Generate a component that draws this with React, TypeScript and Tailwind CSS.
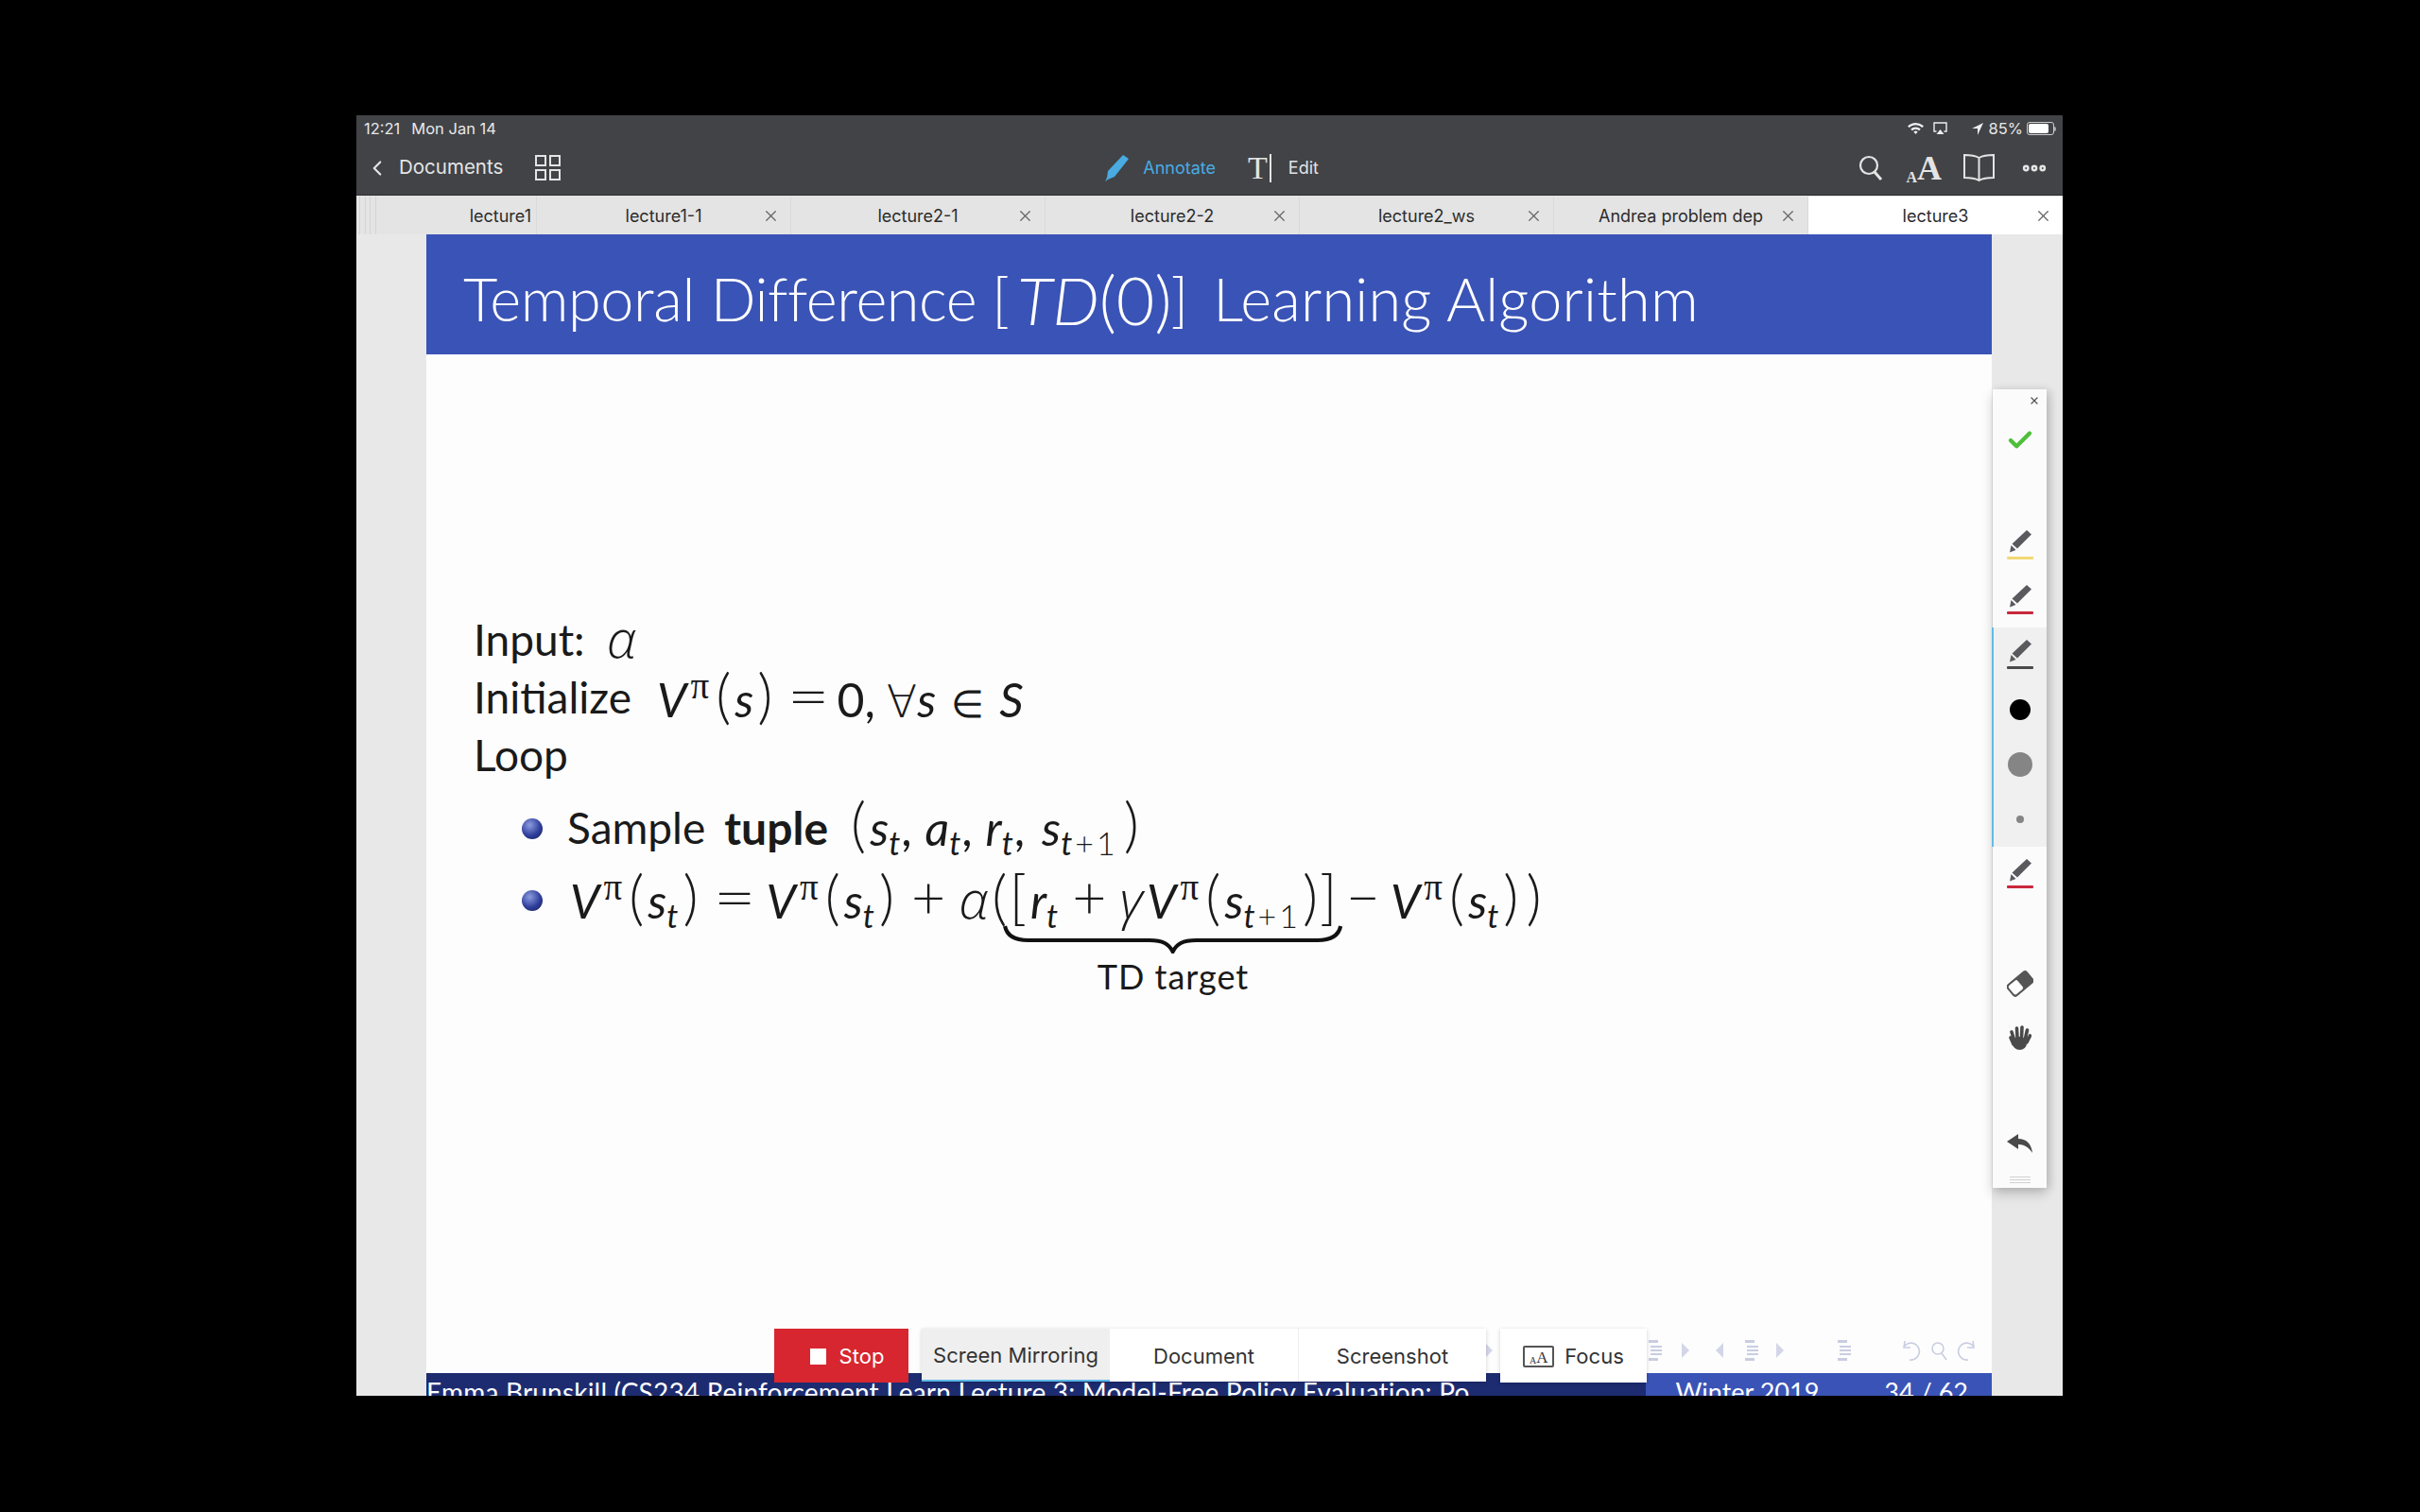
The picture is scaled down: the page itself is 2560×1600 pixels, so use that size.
import { ChevronLeft, MoreHorizontal, Check, X } from 'lucide-react';
import type { ReactNode } from 'react';

const tabs = ['lecture1-1', 'lecture2-1', 'lecture2-2', 'lecture2_ws', 'Andrea problem dep'];

function Sub({ children }: { children: ReactNode }) {
  return <span className="text-[0.68em] leading-none align-[-0.3em] font-light tracking-[1px]">{children}</span>;
}

function Pi() {
  return <span className="font-['Liberation_Serif'] text-[0.78em] leading-none align-[0.5em] ml-[4px] mr-[3px]">π</span>;
}

function Var({ children }: { children: ReactNode }) {
  return <i className="italic font-normal">{children}</i>;
}

function Greek({ children }: { children: ReactNode }) {
  return <i className="font-['Open_Sans'] font-light italic text-[1.12em] leading-none">{children}</i>;
}

function Paren({ children }: { children: ReactNode }) {
  return <span className="text-[1.25em] leading-none font-light mx-[4px]">{children}</span>;
}

function Eq() {
  return <span className="inline-block w-[36px] text-center scale-x-125 text-[1.25em] leading-none font-light mx-[16px]">=</span>;
}

function Plus() {
  return <span className="text-[1.25em] leading-none font-light mx-[14px]">+</span>;
}

function VofS({ arg }: { arg: ReactNode }) {
  return (
    <>
      <Var>V</Var>
      <Pi />
      <Paren>(</Paren>
      {arg}
      <Paren>)</Paren>
    </>
  );
}

function Bullet() {
  return (
    <span className="w-[22px] h-[22px] rounded-full shrink-0 bg-[radial-gradient(circle_at_38%_32%,#8c9ce0,#2f3f9c_55%,#141c50)]" />
  );
}

function Pen({ line }: { line: string }) {
  return (
    <svg width="28" height="32" viewBox="0 0 28 32">
      <path d="M21 0l5 4.5-15 15-5.5-5z" fill="#5a5a5e" />
      <path d="M4.5 16l5 5-6.5 2.5z" fill="#5a5a5e" />
      <rect x="0" y="28" width="28" height="3" rx="1" fill={line} />
    </svg>
  );
}

function Tool({ children }: { children: ReactNode }) {
  return <div className="h-[58px] flex items-center justify-center">{children}</div>;
}

function PenToolbar() {
  return (
    <div className="absolute left-[1731px] top-[290px] w-[57px] h-[845px] bg-[#fbfbfc] shadow-[0_6px_12px_rgba(0,0,0,0.2),4px_0_8px_rgba(0,0,0,0.1)] flex flex-col text-[#555]">
      <div className="h-[24px] flex items-start justify-end pr-[7px] pt-[6px]">
        <X size={12} strokeWidth={2.5} />
      </div>
      <div className="h-[60px] flex items-center justify-center">
        <Check size={30} strokeWidth={3.5} className="text-[#4fbf3a]" />
      </div>
      <div className="h-[52px]" />
      <Tool><Pen line="#f3d873" /></Tool>
      <Tool><Pen line="#c8283c" /></Tool>
      <div className="bg-[#f0f0f1] border-l-2 border-[#62bde6] h-[232px] flex flex-col -ml-[1px]">
        <Tool><Pen line="#4a4a4a" /></Tool>
        <Tool><span className="w-[22px] h-[22px] rounded-full bg-black" /></Tool>
        <Tool><span className="w-[26px] h-[26px] rounded-full bg-[#858585]" /></Tool>
        <Tool><span className="w-[8px] h-[8px] rounded-full bg-[#858585]" /></Tool>
      </div>
      <Tool><Pen line="#c8283c" /></Tool>
      <div className="h-[58px]" />
      <Tool>
        <svg width="28" height="28" viewBox="0 0 28 28">
          <g transform="rotate(-40 14 14)">
            <rect x="0" y="6" width="28" height="16" rx="3.5" fill="#555" />
            <rect x="2" y="8" width="12" height="12" rx="2" fill="#fff" />
          </g>
        </svg>
      </Tool>
      <Tool>
        <svg width="25" height="28" viewBox="0 0 25 28" fill="#4a4a4a" stroke="#4a4a4a" strokeWidth="3.6" strokeLinecap="round">
          <path d="M6.5 15L4 7M10 13L9.5 3M14.5 13L15 2M18.5 14L20.5 5M20 18L23.5 11" fill="none" />
          <ellipse cx="12.5" cy="19" rx="7.5" ry="7" strokeWidth="0" />
          <path d="M3 13L6 20" fill="none" />
        </svg>
      </Tool>
      <div className="h-[53px]" />
      <Tool>
        <svg width="27" height="20" viewBox="0 0 27 20" fill="#4a4a4a">
          <path d="M0 8L12 0v5c8 0 14 5 15 15-4-6-9-9-15-9v5z" />
        </svg>
      </Tool>
      <div className="flex flex-col items-center gap-[2px] mt-[6px]">
        <span className="w-[22px] h-px bg-[#d0d0d0]" />
        <span className="w-[22px] h-px bg-[#d0d0d0]" />
        <span className="w-[22px] h-px bg-[#d0d0d0]" />
      </div>
    </div>
  );
}

function BeamerStack() {
  return (
    <svg width="18" height="24" viewBox="0 0 18 24" fill="#c9cde2">
      <rect x="3" y="1" width="10" height="3" />
      <rect x="5" y="7" width="12" height="2" />
      <rect x="5" y="11" width="12" height="2" />
      <rect x="5" y="15" width="12" height="2" />
      <rect x="3" y="20" width="10" height="3" />
    </svg>
  );
}

function Tri({ left }: { left?: boolean }) {
  return (
    <svg width="9" height="18" viewBox="0 0 9 18" fill="#d3d6e8">
      <path d={left ? 'M9 1v16L1 9z' : 'M0 1v16l8-8z'} />
    </svg>
  );
}

function BeamerNav() {
  return (
    <div className="absolute right-[89px] bottom-[35px] flex items-center">
      <span className="mr-[161px]"><Tri /></span>
      <BeamerStack />
      <span className="ml-[20px]"><Tri /></span>
      <span className="ml-[26px]"><Tri left /></span>
      <span className="ml-[20px]"><BeamerStack /></span>
      <span className="ml-[18px]"><Tri /></span>
      <span className="ml-[53px]"><BeamerStack /></span>
      <svg className="ml-[50px]" width="84" height="26" viewBox="0 0 84 26" fill="none" stroke="#c9cde2" strokeWidth="1.6">
        <path d="M6 3l-1 7 7 0M5 9a9 9 0 1 1 6 14" />
        <circle cx="41" cy="11" r="6" />
        <path d="M45 16l5 7" />
        <path d="M78 3l1 7-7 0M79 9a9 9 0 1 0-6 14" />
      </svg>
    </div>
  );
}

function ShareToolbar() {
  const cell = 'h-[56px] flex items-center justify-center pt-[2px] text-[22px] text-[#333]';
  return (
    <div className="absolute left-[442px] top-[1284px] flex items-start font-['Inter',sans-serif]">
      <div className="w-[142px] h-[57px] bg-[#d7262f] text-white flex items-center justify-center gap-[14px] pl-[12px] pt-[2px] text-[22px]">
        <span className="w-[17px] h-[17px] bg-white" />
        Stop
      </div>
      <div className="ml-[14px] flex shadow-[0_1px_4px_rgba(0,0,0,0.18)]">
        <div className={`${cell} w-[199px] bg-[#efefef] border-b-2 border-[#5cb8e6]`}>Screen Mirroring</div>
        <div className={`${cell} w-[200px] bg-white border-r border-[#eee]`}>Document</div>
        <div className={`${cell} w-[198px] bg-white`}>Screenshot</div>
      </div>
      <div className={`${cell} ml-[15px] w-[155px] h-[57px] bg-white gap-[11px] shadow-[0_1px_4px_rgba(0,0,0,0.18)]`}>
        <span className="w-[33px] h-[23px] rounded-[2px] border-2 border-[#555] flex items-end justify-center font-['Liberation_Serif'] leading-none text-[#333]">
          <span className="text-[10px]">A</span>
          <span className="text-[17px]">A</span>
        </span>
        Focus
      </div>
    </div>
  );
}

function StatusBar() {
  return (
    <div className="h-[27px] pt-[1px] flex items-center justify-between pl-[8px] pr-[7px] text-[16.5px] text-[#e8e8e8]">
      <div className="flex gap-[12px]">
        <span>12:21</span>
        <span>Mon Jan 14</span>
      </div>
      <div className="flex items-center">
        <svg width="17" height="14" viewBox="0 0 17 14" fill="#eee">
          <path d="M0 4.5a12 12 0 0 1 17 0l-1.6 1.6a10 10 0 0 0-13.8 0z" />
          <path d="M3.2 7.6a7.5 7.5 0 0 1 10.6 0l-1.6 1.6a5.2 5.2 0 0 0-7.4 0z" />
          <path d="M6.3 10.6a3 3 0 0 1 4.4 0L8.5 13z" />
        </svg>
        <svg className="ml-[10px]" width="15" height="14" viewBox="0 0 15 14" fill="none" stroke="#eee" strokeWidth="1.4">
          <path d="M3.5 10H1V1h13v9h-2.5" />
          <path d="M7.5 8l4 5h-8z" fill="#eee" stroke="none" />
        </svg>
        <svg className="ml-[8px]" width="9" height="14" viewBox="0 0 9 14" fill="#8a8c90">
          <path d="M5 1a6 6 0 0 0 4 12A6 6 0 0 1 5 1z" />
        </svg>
        <svg className="ml-[9px]" width="12" height="13" viewBox="0 0 12 13" fill="#eee">
          <path d="M12 0L6 13V6H0z" />
        </svg>
        <span className="ml-[6px]">85%</span>
        <span className="ml-[4px] w-[29px] h-[14px] rounded-[3px] border border-[#ccc] p-[1px] flex">
          <span className="w-[85%] h-full bg-white rounded-[2px]" />
        </span>
        <span className="w-[2px] h-[5px] bg-[#aaa] rounded-r-sm" />
      </div>
    </div>
  );
}

function NavBar() {
  return (
    <div className="h-[58px] flex items-center text-[#e4e4e4] border-b border-[#2e2f32]">
      <ChevronLeft size={26} strokeWidth={2} className="ml-[9px]" />
      <span className="ml-[10px] text-[20.5px]">Documents</span>
      <svg className="ml-[34px]" width="27" height="27" viewBox="0 0 27 27" fill="none" stroke="#e4e4e4" strokeWidth="2">
        <rect x="1" y="1" width="10" height="10" />
        <rect x="16" y="1" width="10" height="10" />
        <rect x="1" y="16" width="10" height="10" />
        <rect x="16" y="16" width="10" height="10" />
      </svg>
      <svg className="ml-[575px]" width="27" height="28" viewBox="0 0 27 28" fill="#49abe2">
        <path d="M20 0l6 4-15 19-7 3-3 2 2-4 1-7z" />
      </svg>
      <span className="ml-[14px] text-[18px] text-[#49abe2]">Annotate</span>
      <span className="ml-[34px] flex items-center h-[30px] font-['Liberation_Serif'] text-[34px] leading-none">
        T<span className="w-[2px] h-[30px] bg-[#e4e4e4] ml-[2px]" />
      </span>
      <span className="ml-[18px] text-[18px]">Edit</span>
      <div className="ml-auto flex items-center pr-[15px]">
        <svg width="26" height="27" viewBox="0 0 26 27" fill="none" stroke="#e4e4e4" strokeWidth="2.2">
          <circle cx="11" cy="11" r="9" />
          <path d="M17 18l7 8" strokeWidth="3" />
        </svg>
        <span className="ml-[24px] flex items-end font-['Liberation_Serif'] font-bold leading-none">
          <span className="text-[16px]">A</span>
          <span className="text-[36px]">A</span>
        </span>
        <svg className="ml-[21px]" width="37" height="30" viewBox="0 0 37 30" fill="none" stroke="#e4e4e4" strokeWidth="2">
          <path d="M18.5 4C15 2 9 1 3 1v24c6 0 12 1 15.5 3C22 26 28 25 34 25V1c-6 0-12 1-15.5 3zM18.5 4v24" />
        </svg>
        <MoreHorizontal size={30} strokeWidth={3.5} className="ml-[25px]" />
      </div>
    </div>
  );
}

function TabBar() {
  return (
    <div className="h-[41px] pt-[1px] flex bg-[#e4e4e4] text-[18px] text-[#2c2c2c]">
      <div className="w-[191px] relative flex items-center justify-end pr-[5px] border-r border-[#d9d9d9]">
        <div className="absolute left-[3px] inset-y-0 w-[18px] flex justify-between">
          <span className="w-px bg-[#d4d4d4]" />
          <span className="w-px bg-[#d4d4d4]" />
          <span className="w-px bg-[#d4d4d4]" />
          <span className="w-px bg-[#d4d4d4]" />
        </div>
        lecture1
      </div>
      {tabs.map(t => (
        <div key={t} className="w-[269px] relative flex items-center justify-center border-r border-[#d9d9d9]">
          {t}
          <X size={19} strokeWidth={1.5} className="absolute right-[11px] text-[#666]" />
        </div>
      ))}
      <div className="flex-1 relative flex items-center justify-center bg-white">
        lecture3
        <X size={19} strokeWidth={1.5} className="absolute right-[11px] text-[#666]" />
      </div>
    </div>
  );
}

function Slide() {
  return (
    <div className="w-[1656px] h-full bg-[#fdfdfd] flex flex-col font-['Lato',sans-serif] text-[#1a1a1a]">
      <div className="h-[127px] shrink-0 bg-[#3a53b6] text-white flex items-center pl-[39px] pt-[10px] text-[63px] font-light whitespace-nowrap">
        <span className="tracking-[-0.4px]">Temporal Difference</span>
        <span className="ml-[16px] mr-[8px]">[</span>
        <span className="text-[70px] leading-none"><i className="italic">TD</i>(0)</span>
        <span className="ml-[-1px] mr-[26px]">]</span>
        <span className="tracking-[0.2px]">Learning Algorithm</span>
      </div>

      <div className="flex-1 pl-[50px] pt-[271px] text-[46px] whitespace-nowrap">
        <div className="h-[61px] flex items-center">
          Input:<span className="ml-[23px] -mt-[5px] text-[50px] leading-none"><Greek>α</Greek></span>
        </div>
        <div className="h-[61px] flex items-center">
          Initialize
          <span className="ml-[27px] -mt-[5px] text-[50px] leading-none">
            <VofS arg={<Var>s</Var>} />
            <Eq />
            <span className="ml-[-4px]">0,</span>
            <span className="ml-[12px] font-['DejaVu_Sans'] font-extralight text-[0.95em] leading-none">∀</span>
            <Var>s</Var>
            <span className="mx-[16px] font-['DejaVu_Sans'] font-extralight text-[0.8em] leading-none">∈</span>
            <Var>S</Var>
          </span>
        </div>
        <div className="h-[61px] flex items-center">Loop</div>

        <div className="mt-[16px] h-[61px] flex items-center">
          <span className="ml-[51px] mr-[26px] mt-[3px] flex"><Bullet /></span>
          Sample
          <b className="font-bold ml-[20px] text-[48px] leading-none">tuple</b>
          <span className="ml-[20px] -mt-[2px] text-[50px] leading-none">
            <Paren>(</Paren>
            <Var>s</Var><Sub><Var>t</Var></Sub><span className="mr-[14px]">,</span>
            <Var>a</Var><Sub><Var>t</Var></Sub><span className="mr-[14px]">,</span>
            <Var>r</Var><Sub><Var>t</Var></Sub><span className="mr-[18px]">,</span>
            <Var>s</Var><Sub><Var>t</Var><span className="mx-[2px]">+</span>1</Sub>
            <span className="ml-[4px]"><Paren>)</Paren></span>
          </span>
        </div>

        <div className="mt-[15px] h-[61px] flex items-center">
          <span className="ml-[51px] mr-[29px] mt-[2px] flex"><Bullet /></span>
          <span className="text-[50px] leading-none">
            <VofS arg={<><Var>s</Var><Sub><Var>t</Var></Sub></>} />
            <Eq />
            <VofS arg={<><Var>s</Var><Sub><Var>t</Var></Sub></>} />
            <Plus />
            <Greek>α</Greek>
            <Paren>(</Paren>
            <span className="relative ml-[-6px]">
              <Paren>[</Paren>
              <Var>r</Var><Sub><Var>t</Var></Sub>
              <Plus />
              <Greek>γ</Greek>
              <span className="ml-[4px]" />
              <VofS arg={<><Var>s</Var><Sub><Var>t</Var><span className="mx-[2px]">+</span>1</Sub></>} />
              <span className="ml-[-6px]"><Paren>]</Paren></span>
              <span className="absolute left-[-2px] right-[-2px] top-[56px] flex flex-col items-center">
                <svg className="w-full h-[30px]" viewBox="0 0 350 30" preserveAspectRatio="none" fill="none" stroke="#111" strokeWidth="4">
                  <path d="M2 1c2 10 10 15 24 15h125c14 0 20 4 24 12c4-8 10-12 24-12h125c14 0 22-5 24-15" />
                </svg>
                <span className="text-[36px] font-normal leading-none mt-[6px] tracking-[1px]">TD target</span>
              </span>
            </span>
            <span className="ml-[5px] mr-[11px] font-light text-[1.25em] leading-none">−</span>
            <VofS arg={<><Var>s</Var><Sub><Var>t</Var></Sub></>} />
            <Paren>)</Paren>
          </span>
        </div>
      </div>

      <div className="h-[24px] shrink-0 flex text-white leading-[30px] overflow-hidden whitespace-nowrap bg-[#3a53b6]">
        <div className="w-[1290px] bg-[#1d2c70] pt-[5px] overflow-hidden text-[28px] tracking-[0.2px]">
          Emma Brunskill (CS234 Reinforcement Learn Lecture 3: Model-Free Policy Evaluation: Po
        </div>
        <div className="flex-1 pt-[5px] flex justify-end pr-[25px] gap-[69px] text-[27px]">
          <span>Winter 2019</span>
          <span>34 / 62</span>
        </div>
      </div>
    </div>
  );
}

export default function App() {
  return (
    <div className="w-[2560px] h-[1600px] bg-black pt-[122px] pl-[377px] font-['Inter',sans-serif]">
      <div className="relative w-[1805px] h-[1355px] overflow-hidden bg-[#e8e8e8] flex flex-col">
        <div className="bg-[#414347] shrink-0">
          <StatusBar />
          <NavBar />
        </div>
        <TabBar />
        <div className="flex-1 min-h-0 pl-[74px]">
          <Slide />
        </div>
        <BeamerNav />
        <ShareToolbar />
        <PenToolbar />
      </div>
    </div>
  );
}
